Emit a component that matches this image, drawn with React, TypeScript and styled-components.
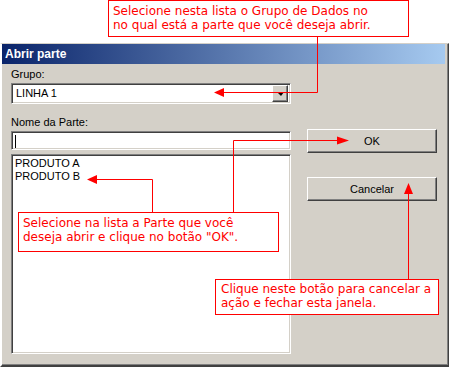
import React from "react";
import styled, { createGlobalStyle, css } from "styled-components";

const GlobalStyle = createGlobalStyle`
  html, body {
    margin: 0;
    padding: 0;
    background: #ffffff;
  }
  body {
    font-family: "Liberation Sans", Arial, sans-serif;
    font-size: 11px;
  }
`;

const sunken = css`
  box-sizing: border-box;
  border: 1px solid;
  border-color: #808080 #ffffff #ffffff #808080;
  box-shadow: inset 1px 1px 0 #404040, inset -1px -1px 0 #d4d0c8;
  background: #ffffff;
`;

const raised = css`
  box-sizing: border-box;
  border: 1px solid;
  border-color: #ffffff #404040 #404040 #ffffff;
  box-shadow: inset -1px -1px 0 #808080;
  background: #d4d0c8;
`;

const Stage = styled.div`
  position: relative;
  width: 449px;
  height: 367px;
  overflow: hidden;
  padding-top: 43px;
  box-sizing: border-box;
`;

const Window = styled.div`
  box-sizing: border-box;
  width: 449px;
  height: 324px;
  background: #d4d0c8;
  border-style: solid;
  border-width: 1px 1px 2px 2px;
  border-color: #d4d0c8 #404040 #404040 #ffffff;
  box-shadow: inset -1px -1px 0 #808080;
  padding: 0 3px 0 0;
  display: flex;
  flex-direction: column;
`;

const TitleBar = styled.div`
  height: 20px;
  display: flex;
  align-items: center;
  padding-left: 3px;
  background: linear-gradient(to right, #0a246a, #a6caf0);
  color: #ffffff;
  font-weight: bold;
  font-size: 12px;
`;

const Body = styled.div`
  display: flex;
  gap: 16px;
  padding: 2px 0 0 9px;
`;

const LeftColumn = styled.div`
  width: 280px;
  display: flex;
  flex-direction: column;
`;

const Label = styled.div<{ $top?: number }>`
  line-height: 13px;
  height: 13px;
  color: #000000;
  margin-top: ${(p) => p.$top ?? 0}px;
  margin-bottom: 2px;
`;

const Combo = styled.div`
  ${sunken};
  height: 21px;
  display: flex;
  align-items: center;
  padding: 2px;
`;

const ComboText = styled.div`
  flex: 1;
  padding-left: 2px;
  line-height: 17px;
  color: #000000;
`;

const DropButton = styled.div`
  ${raised};
  width: 16px;
  height: 17px;
  display: flex;
  align-items: center;
  justify-content: center;
`;

const Triangle = styled.div`
  width: 0;
  height: 0;
  border-left: 4px solid transparent;
  border-right: 3px solid transparent;
  border-top: 4px solid #000000;
`;

const TextInput = styled.div`
  ${sunken};
  height: 19px;
  padding: 3px 0 0 3px;
`;

const Caret = styled.div`
  width: 1px;
  height: 13px;
  background: #000000;
`;

const ListBox = styled.div`
  ${sunken};
  margin-top: 4px;
  height: 200px;
  padding: 2px 3px;
`;

const ListItem = styled.div`
  line-height: 13px;
  color: #000000;
`;

const RightColumn = styled.div`
  width: 130px;
  display: flex;
  flex-direction: column;
  gap: 24px;
  padding-top: 63px;
`;

const Button = styled.div`
  ${raised};
  height: 24px;
  display: flex;
  align-items: center;
  justify-content: center;
  color: #000000;
`;

const Callout = styled.div<{ $x: number; $y: number; $w: number; $h: number; $pl: number; $pt: number }>`
  position: absolute;
  left: ${(p) => p.$x}px;
  top: ${(p) => p.$y}px;
  width: ${(p) => p.$w}px;
  height: ${(p) => p.$h}px;
  box-sizing: border-box;
  border: 1px solid #ff0000;
  background: #ffffff;
  color: #ff0000;
  font-family: "DejaVu Sans", Verdana, sans-serif;
  font-size: 12px;
  line-height: 13.5px;
  padding: ${(p) => p.$pt}px 0 0 ${(p) => p.$pl}px;
  white-space: nowrap;
`;

const Connectors = styled.svg`
  position: absolute;
  left: 0;
  top: 0;
  pointer-events: none;
`;

export default function App() {
  return (
    <>
      <GlobalStyle />
      <Stage>
        <Window>
          <TitleBar>Abrir parte</TitleBar>
          <Body>
            <LeftColumn>
              <Label $top={2}>Grupo:</Label>
              <Combo>
                <ComboText>LINHA 1</ComboText>
                <DropButton>
                  <Triangle />
                </DropButton>
              </Combo>
              <Label $top={12}>Nome da Parte:</Label>
              <TextInput>
                <Caret />
              </TextInput>
              <ListBox>
                <ListItem>PRODUTO A</ListItem>
                <ListItem>PRODUTO B</ListItem>
              </ListBox>
            </LeftColumn>
            <RightColumn>
              <Button>OK</Button>
              <Button>Cancelar</Button>
            </RightColumn>
          </Body>
        </Window>

        <Connectors width={449} height={367}>
          <g fill="none" stroke="#ff0000" strokeWidth={1}>
            <path d="M317.5 37 V92.5 H223" />
            <path d="M96 179.5 H152.5 V212" />
            <path d="M233.5 212 V140.5 H338" />
            <path d="M408.5 193 V279" />
          </g>
          <g fill="#ff0000">
            <polygon points="214,92.5 224,88 224,97" />
            <polygon points="87,179.5 97,175 97,184" />
            <polygon points="349,140.5 337,136.5 337,144.5" />
            <polygon points="408.5,183 404,194 413,194" />
          </g>
        </Connectors>

        <Callout $x={108} $y={0} $w={301} $h={37} $pl={4} $pt={4}>
          Selecione nesta lista o Grupo de Dados no
          <br />
          no qual está a parte que você deseja abrir.
        </Callout>
        <Callout $x={18} $y={212} $w={261} $h={40} $pl={4} $pt={4}>
          Selecione na lista a Parte que você
          <br />
          deseja abrir e clique no botão "OK".
        </Callout>
        <Callout $x={215} $y={279} $w={224} $h={36} $pl={5} $pt={3}>
          Clique neste botão para cancelar a
          <br />
          ação e fechar esta janela.
        </Callout>
      </Stage>
    </>
  );
}
